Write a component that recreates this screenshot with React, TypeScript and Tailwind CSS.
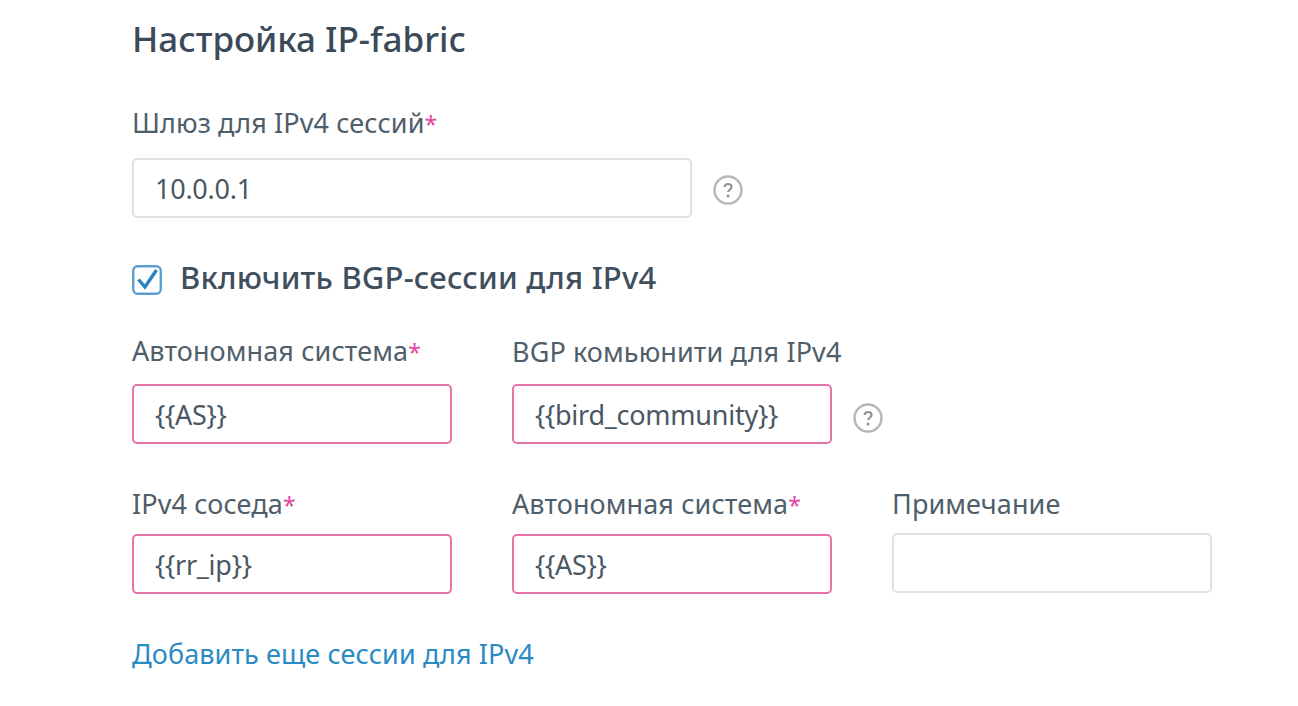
import React from 'react';

const font = { fontFamily: '"Noto Sans", "Open Sans", sans-serif' };

const Help = ({ className }: { className: string }) => (
  <svg width="32" height="32" viewBox="0 0 32 32" className={`shrink-0 ${className}`} fill="none">
    <circle cx="16" cy="16" r="13.5" stroke="#b4b8bc" strokeWidth="2.4" />
    <path d="M12.6 13c.2-2 1.600-3 3.500-3 2 0 3.400 1.200 3.400 2.900 0 1.500-.9 2.200-1.900 2.900-.9.6-1.400 1.100-1.400 2.300" stroke="#8d9499" strokeWidth="2.2" />
    <circle cx="16.100" cy="22" r="1.500" fill="#8d9499" />
  </svg>
);

const Label = ({ text, required }: { text: string; required?: boolean }) => (
  <div className="text-[27px] leading-[36px] tracking-[0.1px] text-[#4f5e6b] whitespace-nowrap">
    {text}
    {required && <span className="text-[23px] text-[#e0489f]">*</span>}
  </div>
);

const Field = ({ value, error, className }: { value?: string; error?: boolean; className: string }) => (
  <input
    readOnly
    value={value ?? ''}
    style={font}
    className={`h-[60px] rounded-[5px] border-2 bg-white px-[21px] text-[27px] tracking-[-0.25px] text-[#4a5762] outline-none ${error ? 'border-[#e573a8]' : 'border-[#dfe2e4]'} ${className}`}
  />
);

const Cell = ({ label, value, required, error, gap }: { label: string; value?: string; required?: boolean; error?: boolean; gap: string }) => (
  <div className="w-[320px]">
    <Label text={label} required={required} />
    <Field value={value} error={error} className={`${gap} w-[320px]`} />
  </div>
);

export default function App() {
  return (
    <div style={font} className="h-[706px] w-[1298px] overflow-hidden bg-white pl-[132px] pt-[17px]">
      <h1 className="text-[35px] font-medium leading-[44px] text-[#3a4a59]">Настройка IP-fabric</h1>

      <div className="mt-[44px]">
        <Label text="Шлюз для IPv4 сессий" required />
        <div className="mt-[16px] flex items-center gap-[20px]">
          <Field value="10.0.0.1" className="w-[560px]" />
          <Help className="mt-[4px]" />
        </div>
      </div>

      <div className="mt-[39px] flex items-center gap-[18px]">
        <svg width="30" height="30" viewBox="0 0 30 30" className="shrink-0" fill="none">
          <rect x="1.200" y="1.200" width="27.600" height="27.600" rx="4.500" stroke="#5b9fce" strokeWidth="2.400" />
          <path d="M6.500 14.500l6.500 7.500L24.500 5" stroke="#2a83c0" strokeWidth="3.400" />
        </svg>
        <span className="pb-[5px] text-[31px] font-medium leading-[40px] tracking-[0.2px] text-[#3f4f5e]">Включить BGP-сессии для IPv4</span>
      </div>

      <div className="mt-[31px] flex items-end gap-[60px]">
        <Cell label="Автономная система" value="{{AS}}" required error gap="mt-[14px]" />
        <Cell label="BGP комьюнити для IPv4" value="{{bird_community}}" error gap="mt-[14px]" />
        <div className="-ml-[40px] flex h-[60px] items-center">
          <Help className="mt-[8px]" />
        </div>
      </div>

      <div className="mt-[42px] flex gap-[60px]">
        <Cell label="IPv4 соседа" value="{{rr_ip}}" required error gap="mt-[11px]" />
        <Cell label="Автономная система" value="{{AS}}" required error gap="mt-[11px]" />
        <Cell label="Примечание" gap="mt-[11px]" />
      </div>

      <a className="mt-[42px] block text-[27px] leading-[36px] tracking-[0.1px] text-[#2a8ac4]">Добавить еще сессии для IPv4</a>
    </div>
  );
}
